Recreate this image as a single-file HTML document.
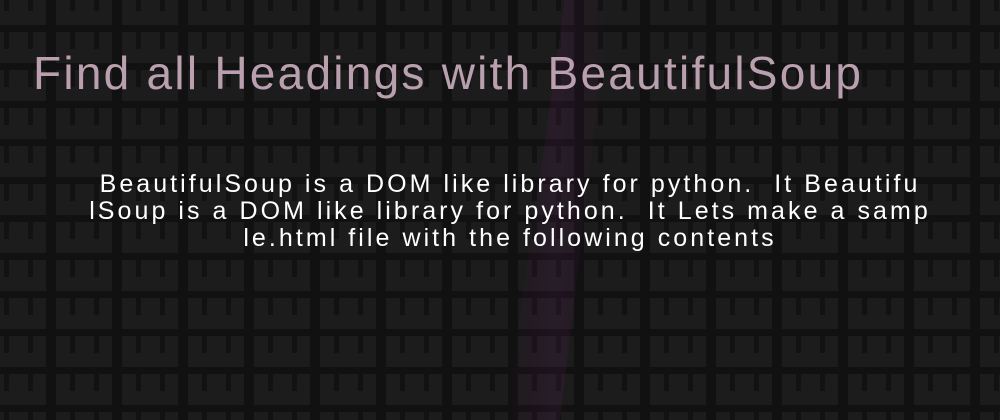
<html><head><style>
body{margin:0;width:1000px;height:420px;overflow:hidden;background:#121212;position:relative;font-family:"Liberation Sans",sans-serif}
svg{position:absolute;left:0;top:0}
h1{position:absolute;left:33px;top:46px;margin:0;font-weight:normal;font-size:46px;color:#baa0ae;white-space:nowrap;letter-spacing:2.25px}
p{position:absolute;left:0;width:1020px;top:171px;margin:0;font-size:25px;line-height:27px;color:#fff;text-align:center;letter-spacing:3.05px;white-space:nowrap}
</style></head><body>
<svg width="1000" height="420"><defs>
<pattern id="t" width="66" height="38" patternUnits="userSpaceOnUse" x="-10" y="-6">
<rect width="66" height="38" fill="#111"/>
<rect x="0" y="0" width="56" height="31" fill="#1c1c1c"/>
<rect x="14" y="0" width="5" height="17" fill="#121212"/>
<rect x="38" y="0" width="5" height="17" fill="#121212"/>
</pattern>
<linearGradient id="g" x1="0" x2="1"><stop offset="0" stop-color="#5a1a5a" stop-opacity="0"/><stop offset=".5" stop-color="#5a1a5a" stop-opacity=".2"/><stop offset="1" stop-color="#5a1a5a" stop-opacity="0"/></linearGradient>
</defs>
<rect width="1000" height="420" fill="url(#t)"/>
<polygon points="565,0 610,0 560,420 505,420" fill="url(#g)"/>
</svg>
<h1>Find all Headings with BeautifulSoup</h1>
<p>BeautifulSoup is a DOM like library for python.&nbsp; It Beautifu<br>lSoup is a DOM like library for python.&nbsp; It Lets make a samp<br>le.html file with the following contents</p>
</body></html>
